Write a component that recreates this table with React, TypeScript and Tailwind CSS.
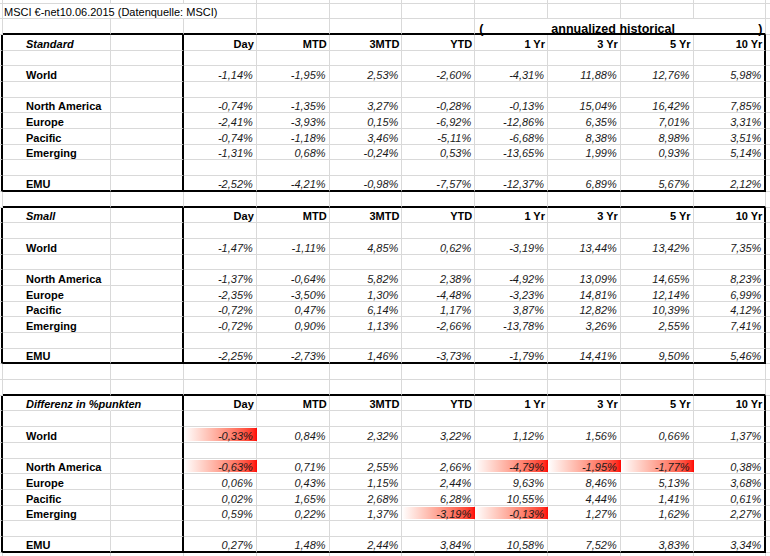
import React from "react";

type Line = {
  label?: string;
  head?: boolean;
  values?: string[];
  bars?: number[];
  inSection: boolean;
  thickBottom?: boolean;
  wideLabel?: boolean;
};

const HEADS = ["Day", "MTD", "3MTD", "YTD", "1 Yr", "3 Yr", "5 Yr", "10 Yr"];

const LIGHT_B = "border-b border-b-[#d9d9d9]";
const THICK_B = "border-b-2 border-b-black";
const LIGHT_R = "border-r border-r-[#d9d9d9]";
const THICK_R = "border-r-2 border-r-black";

type Region = { label: string; values: string[]; bars?: number[] };

function section(name: string, regions: Region[]): Line[] {
  const [world, na, eu, pac, em, emu] = regions;
  const row = (r: Region): Line => ({ label: r.label, values: r.values, bars: r.bars, inSection: true });
  return [
    { label: name, head: true, values: HEADS, inSection: true, wideLabel: name.length > 12 },
    { inSection: true },
    row(world),
    { inSection: true },
    row(na),
    row(eu),
    row(pac),
    row(em),
    { inSection: true },
    { ...row(emu), thickBottom: true },
  ];
}

const standard = section("Standard", [
  { label: "World", values: ["-1,14%", "-1,95%", "2,53%", "-2,60%", "-4,31%", "11,88%", "12,76%", "5,98%"] },
  { label: "North America", values: ["-0,74%", "-1,35%", "3,27%", "-0,28%", "-0,13%", "15,04%", "16,42%", "7,85%"] },
  { label: "Europe", values: ["-2,41%", "-3,93%", "0,15%", "-6,92%", "-12,86%", "6,35%", "7,01%", "3,31%"] },
  { label: "Pacific", values: ["-0,74%", "-1,18%", "3,46%", "-5,11%", "-6,68%", "8,38%", "8,98%", "3,51%"] },
  { label: "Emerging", values: ["-1,31%", "0,68%", "-0,24%", "0,53%", "-13,65%", "1,99%", "0,93%", "5,14%"] },
  { label: "EMU", values: ["-2,52%", "-4,21%", "-0,98%", "-7,57%", "-12,37%", "6,89%", "5,67%", "2,12%"] },
]);

const small = section("Small", [
  { label: "World", values: ["-1,47%", "-1,11%", "4,85%", "0,62%", "-3,19%", "13,44%", "13,42%", "7,35%"] },
  { label: "North America", values: ["-1,37%", "-0,64%", "5,82%", "2,38%", "-4,92%", "13,09%", "14,65%", "8,23%"] },
  { label: "Europe", values: ["-2,35%", "-3,50%", "1,30%", "-4,48%", "-3,23%", "14,81%", "12,14%", "6,99%"] },
  { label: "Pacific", values: ["-0,72%", "0,47%", "6,14%", "1,17%", "3,87%", "12,82%", "10,39%", "4,12%"] },
  { label: "Emerging", values: ["-0,72%", "0,90%", "1,13%", "-2,66%", "-13,78%", "3,26%", "2,55%", "7,41%"] },
  { label: "EMU", values: ["-2,25%", "-2,73%", "1,46%", "-3,73%", "-1,79%", "14,41%", "9,50%", "5,46%"] },
]);

const diff = section("Differenz in %punkten", [
  { label: "World", values: ["-0,33%", "0,84%", "2,32%", "3,22%", "1,12%", "1,56%", "0,66%", "1,37%"], bars: [0] },
  { label: "North America", values: ["-0,63%", "0,71%", "2,55%", "2,66%", "-4,79%", "-1,95%", "-1,77%", "0,38%"], bars: [0, 4, 5, 6] },
  { label: "Europe", values: ["0,06%", "0,43%", "1,15%", "2,44%", "9,63%", "8,46%", "5,13%", "3,68%"] },
  { label: "Pacific", values: ["0,02%", "1,65%", "2,68%", "6,28%", "10,55%", "4,44%", "1,41%", "0,61%"] },
  { label: "Emerging", values: ["0,59%", "0,22%", "1,37%", "-3,19%", "-0,13%", "1,27%", "1,62%", "2,27%"], bars: [3, 4] },
  { label: "EMU", values: ["0,27%", "1,48%", "2,44%", "3,84%", "10,58%", "7,52%", "3,83%", "3,34%"] },
]);

const lines: Line[] = [
  ...standard,
  { inSection: false, thickBottom: true },
  ...small,
  { inSection: false },
  { inSection: false, thickBottom: true },
  ...diff,
];

function SheetRow({ line }: { line: Line }) {
  const bottom = line.thickBottom ? THICK_B : LIGHT_B;
  const side = line.inSection ? THICK_R : LIGHT_R;
  return (
    <div className="flex h-[15.7px]">
      <div className={`w-[3px] shrink-0 ${LIGHT_B} ${side}`} />
      <div
        className={`w-[108px] shrink-0 flex items-end whitespace-nowrap pl-[23px] ${bottom} ${
          line.wideLabel ? "border-r border-r-transparent" : LIGHT_R
        }`}
      >
        {line.label && (
          <span className={`leading-[13px] mb-[-1px] font-bold ${line.head ? "italic" : ""}`}>{line.label}</span>
        )}
      </div>
      <div className={`w-[73px] shrink-0 ${bottom} ${side}`} />
      {HEADS.map((_, i) => {
        const value = line.values?.[i];
        const bar = line.bars?.includes(i);
        return (
          <div
            key={i}
            className={`relative w-[72.8px] shrink-0 flex items-end justify-end ${bottom} ${
              i === 7 ? side : LIGHT_R
            } ${line.head ? "pr-[2px]" : "pr-[3px]"}`}
          >
            {bar && (
              <div className="absolute left-0 right-[-1px] top-[1px] bottom-[1px] bg-linear-to-r from-white to-[#ff0000]" />
            )}
            {value && (
              <span
                className={`relative leading-[13px] mb-[-1px] ${line.head ? "font-bold" : "italic text-[#1a1a1a]"}`}
              >
                {value}
              </span>
            )}
          </div>
        );
      })}
      <div className={`flex-1 ${LIGHT_B}`} />
    </div>
  );
}

export default function App() {
  return (
    <div className="w-[770px] h-[556px] overflow-hidden bg-white text-black text-[11px] font-['Liberation_Sans',Arial,sans-serif]">
      {/* partial first row */}
      <div className="flex h-[3.6px]">
        <div className={`w-[3px] shrink-0 ${LIGHT_B} ${LIGHT_R}`} />
        <div className={`w-[108px] shrink-0 ${LIGHT_B} ${LIGHT_R}`} />
        <div className={`w-[73px] shrink-0 ${LIGHT_B} ${LIGHT_R}`} />
        {HEADS.map((h) => (
          <div key={h} className={`w-[72.8px] shrink-0 ${LIGHT_B} ${LIGHT_R}`} />
        ))}
        <div className={`flex-1 ${LIGHT_B}`} />
      </div>

      {/* title */}
      <div className="flex h-[15.7px]">
        <div className={`w-[3px] shrink-0 ${LIGHT_B} ${LIGHT_R}`} />
        <div className={`w-[253.8px] shrink-0 flex items-end whitespace-nowrap pl-[1px] ${LIGHT_B} ${LIGHT_R}`}>
          <span className="leading-[13px] mb-[-1px]">MSCI €-net10.06.2015 (Datenquelle: MSCI)</span>
        </div>
        {HEADS.slice(1).map((h) => (
          <div key={h} className={`w-[72.8px] shrink-0 ${LIGHT_B} ${LIGHT_R}`} />
        ))}
        <div className={`flex-1 ${LIGHT_B}`} />
      </div>

      {/* annualized header */}
      <div className="flex h-[15.7px]">
        <div className={`w-[3px] shrink-0 ${LIGHT_B} ${LIGHT_R}`} />
        <div className={`w-[108px] shrink-0 ${THICK_B} ${LIGHT_R}`} />
        <div className={`w-[73px] shrink-0 ${THICK_B} ${LIGHT_R}`} />
        {HEADS.slice(0, 4).map((h) => (
          <div key={h} className={`w-[72.8px] shrink-0 ${THICK_B} ${LIGHT_R}`} />
        ))}
        <div
          className={`w-[291.2px] shrink-0 flex items-end whitespace-nowrap font-bold text-[12.5px] pl-[4px] pr-[3px] ${THICK_B} ${LIGHT_R}`}
        >
          <span className="leading-[14px] mb-[-3px]">(</span>
          <span className="leading-[14px] mb-[-3px] ml-[68px]">annualized historical</span>
          <span className="leading-[14px] mb-[-3px] ml-auto">)</span>
        </div>
        <div className={`flex-1 ${LIGHT_B}`} />
      </div>

      {lines.map((line, i) => (
        <SheetRow key={i} line={line} />
      ))}

      {/* partial last row */}
      <div className="flex h-[3px]">
        <div className={`w-[3px] shrink-0 ${LIGHT_R}`} />
        <div className={`w-[108px] shrink-0 ${LIGHT_R}`} />
        <div className={`w-[73px] shrink-0 ${LIGHT_R}`} />
        {HEADS.map((h) => (
          <div key={h} className={`w-[72.8px] shrink-0 ${LIGHT_R}`} />
        ))}
        <div className="flex-1" />
      </div>
    </div>
  );
}
